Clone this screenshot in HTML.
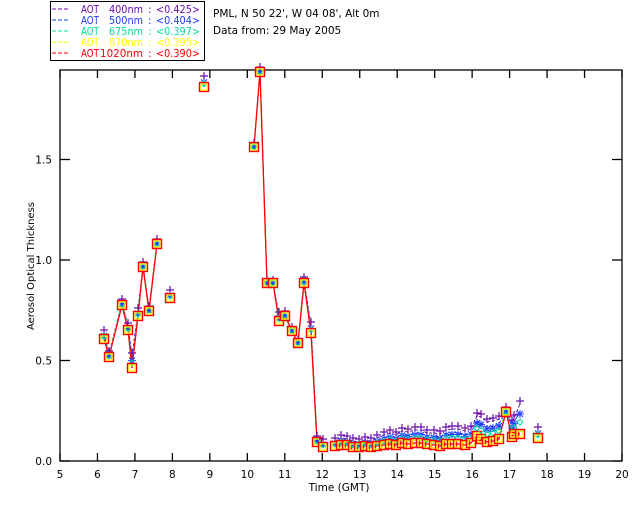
<!DOCTYPE html>
<html><head><meta charset="utf-8"><style>
html,body{margin:0;padding:0;background:#fff;}
svg{display:block;font-family:"DejaVu Sans","Liberation Sans",sans-serif;}
</style></head><body>
<svg id="s" width="640" height="512" viewBox="0 0 640 512" xmlns="http://www.w3.org/2000/svg">
<rect width="640" height="512" fill="#fff"/>
<rect x="50.5" y="1.5" width="154" height="59" fill="#fff" stroke="#000" stroke-width="1"/>
<g font-size="10.5" id="lg"></g>
<g font-size="10.5">
<text x="213" y="17" fill="#000">PML, N 50 22', W 04 08', Alt 0m</text>
<text x="213" y="34" fill="#000">Data from: 29 May 2005</text>
<text x="339" y="491" fill="#000" text-anchor="middle">Time (GMT)</text>
<text x="34" y="266" fill="#000" text-anchor="middle" transform="rotate(-90 34 266)" font-size="10">Aerosol Optical Thickness</text>
</g>
<g id="ax" stroke="#000" stroke-width="1.3" fill="none"></g>
<g id="lb" font-size="10.5" fill="#000"></g>
<g id="dt"></g>
</svg>
<script>
var ns="http://www.w3.org/2000/svg";
function el(p,t,a,tx){var e=document.createElementNS(ns,t);for(var k in a)e.setAttribute(k,a[k]);if(tx)e.textContent=tx;document.getElementById(p).appendChild(e);return e;}
var cols=["#6a0dad","#1e3cff","#00e0a0","#ffff00","#ff0000"];
var lgd=[["400nm","<0.425>"],["500nm","<0.404>"],["675nm","<0.397>"],["870nm","<0.395>"],["1020nm","<0.390>"]];
lgd.forEach(function(r,i){var y=13+i*11;
 el("lg","line",{x1:52,y1:y-4,x2:68,y2:y-4,stroke:cols[i],"stroke-width":1,"stroke-dasharray":"4,2"});
 el("lg","text",{x:81,y:y,fill:cols[i],textLength:18,lengthAdjust:"spacingAndGlyphs"},"AOT");
 var w=r[0].length==6?43:34;
 el("lg","text",{x:143-w,y:y,fill:cols[i],textLength:w,lengthAdjust:"spacingAndGlyphs"},r[0]);
 el("lg","text",{x:148,y:y,fill:cols[i]},":");
 el("lg","text",{x:156,y:y,fill:cols[i],textLength:44,lengthAdjust:"spacingAndGlyphs"},r[1]);
});
var L=60,R=622,T=70,B=461;
el("ax","rect",{x:L,y:T,width:R-L,height:B-T});
for(var h=5;h<=20;h++){var x=L+(h-5)*(R-L)/15;
 el("ax","line",{x1:x,y1:B,x2:x,y2:B-8});el("ax","line",{x1:x,y1:T,x2:x,y2:T+8});
 el("lb","text",{x:x,y:478,"text-anchor":"middle"},""+h);}
[[0,"0.0"],[0.5,"0.5"],[1,"1.0"],[1.5,"1.5"]].forEach(function(v){var y=B-v[0]*201;
 el("ax","line",{x1:L,y1:y,x2:L+10,y2:y});el("ax","line",{x1:R,y1:y,x2:R-10,y2:y});
 el("lb","text",{x:52,y:y+4,"text-anchor":"end"},v[1]);});
var segs=[
[[104,339,-6],[109,357,-3],[122,305,-3],[128,330,-4],[132,368,-12],[138,316,-5],[143,267,-2],[149,311,-2],[157,244,-2]],
[[170,298,-5]],
[[204,87,-8]],
[[254,147,-1],[260,72,-2],[267,283,0],[273,283,0],[279,321,-6],[285,316,-2],[292,331,-1],[298,343,0],[304,283,-3],[311,333,-8],[317,442,-3],[323,447,-5]],
[[335,446,-5],[341,445,-7],[347,445,-6],[353,447,-6],[359,447,-5],[365,446,-6],[371,447,-6],[377,446,-8],[384,445,-10],[390,444,-11],[396,445,-10],[402,443,-12],[408,444,-12],[415,443,-13],[421,443,-13],[427,444,-11],[434,445,-12],[440,446,-12],[446,444,-14],[452,444,-15],[458,444,-15],[465,445,-14],[471,443,-14],[477,436,-20],[481,439,-22],[487,442,-20],[493,441,-20],[499,439,-20],[506,412,-2],[512,437,-14],[514,434,-16],[520,434,-30]],
[[538,438,-8]]];
function pts(s,k){return s.map(function(p){return p[0]+","+(p[1]+p[2]*(4-k)/4)}).join(" ");}
segs.forEach(function(s){for(var k=0;k<5;k++){if(s.length>1)el("dt","polyline",{points:pts(s,k),fill:"none",stroke:cols[k],"stroke-width":k==4?1.3:1,"stroke-dasharray":k==4?"":"3,2"});}});
segs.forEach(function(s){s.forEach(function(p){
 var x=p[0],yr=p[1],o=p[2];
 var yp=yr+o-3,yb=yr+o*0.7+1,yg=yr+o*0.4;
 el("dt","path",{d:"M"+(x-4)+" "+yp+"h8M"+x+" "+(yp-4)+"v8",stroke:cols[0],"stroke-width":1.2});
 el("dt","path",{d:"M"+(x-4)+" "+yb+"h8M"+x+" "+(yb-4)+"v8M"+(x-3)+" "+(yb-3)+"l6 6M"+(x+3)+" "+(yb-3)+"l-6 6",stroke:cols[1],"stroke-width":1});
 el("dt","path",{d:"M"+x+" "+(yg-3)+"l3 3l-3 3l-3 -3z",stroke:cols[2],fill:"none","stroke-width":1});
 el("dt","rect",{x:x-3,y:yr-3,width:6,height:6,fill:"none",stroke:cols[3],"stroke-width":1.2});
 el("dt","rect",{x:x-4.5,y:yr-4.5,width:9,height:9,fill:"none",stroke:cols[4],"stroke-width":1.4});
});});
</script>
</body></html>
